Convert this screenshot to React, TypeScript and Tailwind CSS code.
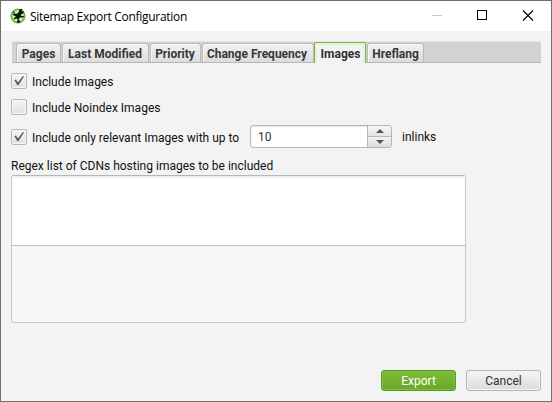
import React from 'react';

const tabs = [
  { name: 'Pages', box: 'w-[45px]' },
  { name: 'Last Modified', box: 'w-[87px] pr-px' },
  { name: 'Priority', box: 'w-[51px] pr-px' },
  { name: 'Change Frequency', box: 'w-[112px] pr-[2px]' },
  { name: 'Images', box: 'w-[52px] pl-px', active: true },
  { name: 'Hreflang', box: 'w-[57px]' },
];

function Logo() {
  return (
    <svg width="16" height="16" viewBox="0 0 16 16" className="shrink-0">
      <circle cx="8" cy="8" r="6.7" fill="#d3f0b8" stroke="#6cb33c" strokeWidth="1.8" />
      <path d="M2.5 4L4 3.5L5.5 6L7.5 5.5L9 3.5L9.5 1L12.5 1L11.5 3.5L14 3L13 5.5L10.5 7L11.5 8L14 8L13.5 9.5L10 9.5L8.5 11.5L10 13L10 14.8L7 14.8L7.5 11L6 10.5L4.5 11.5L3.5 10.5L6 8.5L3 7L2.5 6L4.5 6Z" fill="#0b1606" />
    </svg>
  );
}

function Checkbox({ checked = false }: { checked?: boolean }) {
  return (
    <span className="flex h-4 w-4 shrink-0 items-center justify-center rounded-[2px] border border-[#b8b8b8] bg-gradient-to-b from-[#f6f6f6] to-[#dfdfdf] shadow-[inset_0_0_0_1px_#f7f7f7]">
      {checked && (
        <svg width="14" height="14" viewBox="0 0 14 14">
          <path d="M2.4 6.2L4 5.6L5.9 8.6L11 2L12 2.6L6.4 11.2L5.4 11.2Z" fill="#5a5a5a" />
        </svg>
      )}
    </span>
  );
}

export default function App() {
  return (
    <div className="flex h-[402px] w-[552px] flex-col overflow-hidden border border-[#6f6e70] bg-[#f3f3f3] font-['Roboto','Liberation_Sans',sans-serif] text-[12px] leading-4 text-[#111]">
      <header className="flex h-[30px] shrink-0 items-center bg-white pl-[9px]">
        <Logo />
        <span className="ml-[4px] whitespace-nowrap pt-px font-['Open_Sans','Noto_Sans',sans-serif] text-[12px] tracking-[-0.29px] text-black">Sitemap Export Configuration</span>
        <svg width="120" height="30" className="ml-auto" shapeRendering="crispEdges">
          <path d="M1 14.5h10" stroke="#c8c8c8" />
          <rect x="46.5" y="9.5" width="9" height="9" fill="none" stroke="#000" />
          <path d="M92 9.5l10 10M102 9.5l-10 10" stroke="#000" strokeWidth="1.1" shapeRendering="auto" />
        </svg>
      </header>

      <main className="flex flex-1 flex-col px-[10px] pt-[10px]">
        <nav className="ml-px flex h-[22px] w-[529px] shrink-0 gap-px border-t border-b border-t-[#e6e6e6] border-b-[#b5b5b5] bg-[#d2d2d2] pl-1">
          {tabs.map((t) => (
            <button
              key={t.name}
              className={
                t.active
                  ? `${t.box} relative -mb-px -ml-px h-[21px] rounded-t-[2px] border border-b-0 border-[#7cb843] bg-[#f3f3f3] text-center font-bold leading-[22px] whitespace-nowrap text-[#303030] shadow-[inset_0_2px_0_#e6f0dc,inset_2px_0_0_#e6f0dc,inset_-2px_0_0_#e6f0dc]`
                  : `${t.box} mt-px h-[19px] rounded-t-[3px] border border-b-0 border-[#bababa] bg-gradient-to-b from-[#f2f2f2] to-[#dcdcdc] text-center font-bold leading-5 whitespace-nowrap text-[#383838] shadow-[inset_1px_1px_0_#f8f8f8]`
              }
            >
              {t.name}
            </button>
          ))}
        </nav>

        <label className="mt-[10px] flex h-4 items-center gap-[5px]">
          <Checkbox checked />
          <span className="pt-[2px]">Include Images</span>
        </label>
        <label className="mt-[10px] flex h-4 items-center gap-[5px]">
          <Checkbox />
          <span className="pt-[2px]">Include Noindex Images</span>
        </label>
        <div className="mt-[10px] flex h-[23px] items-center">
          <label className="flex h-4 w-[239px] items-center gap-[5px] whitespace-nowrap">
            <Checkbox checked />
            <span className="pt-[2px]">Include only relevant Images with up to</span>
          </label>
          <div className="flex h-[23px] w-[142px] overflow-hidden rounded-[3px] border border-[#b7b7b7] bg-white shadow-[inset_0_1px_1px_#e5e5e5]">
            <span className="flex-1 pl-[7px] leading-[22px] text-[#333]">10</span>
            <span className="flex w-6 flex-col border-l border-[#b7b7b7]">
              <span className="flex flex-1 items-center justify-center border-b border-[#b7b7b7] bg-gradient-to-b from-[#f7f7f7] to-[#e4e4e4]">
                <svg width="8" height="4"><path d="M0 4L4 0L8 4Z" fill="#555" /></svg>
              </span>
              <span className="flex flex-1 items-center justify-center bg-gradient-to-b from-[#f2f2f2] to-[#dddddd]">
                <svg width="8" height="4"><path d="M0 0L4 4L8 0Z" fill="#555" /></svg>
              </span>
            </span>
          </div>
          <span className="ml-[10px]">inlinks</span>
        </div>

        <div className="mt-[10px] h-4 whitespace-nowrap">Regex list of CDNs hosting images to be included</div>
        <div className="mt-px flex h-[148px] w-[455px] flex-col overflow-hidden rounded-[3px] border border-[#c8c8c8] border-t-[#b7b7b7] bg-[#f7f7f7]">
          <div className="h-[70px] border-b border-[#bfbfbf] bg-white shadow-[inset_0_2px_2px_#eeeeee]" />
        </div>

        <footer className="mt-auto mb-[10px] flex justify-end gap-[10px]">
          <button className="h-[21px] w-[75px] rounded-[3px] border border-[#5b9a24] bg-gradient-to-b from-[#7dbd38] to-[#68a826] leading-5 text-white shadow-[inset_0_0_0_1px_#82bd48]">Export</button>
          <button className="h-[21px] w-[75px] rounded-[3px] border border-[#b5b5b5] bg-gradient-to-b from-[#f4f4f4] to-[#dcdcdc] leading-5 text-[#333] shadow-[inset_0_0_0_1px_#f4f4f4]">Cancel</button>
        </footer>
      </main>
    </div>
  );
}
